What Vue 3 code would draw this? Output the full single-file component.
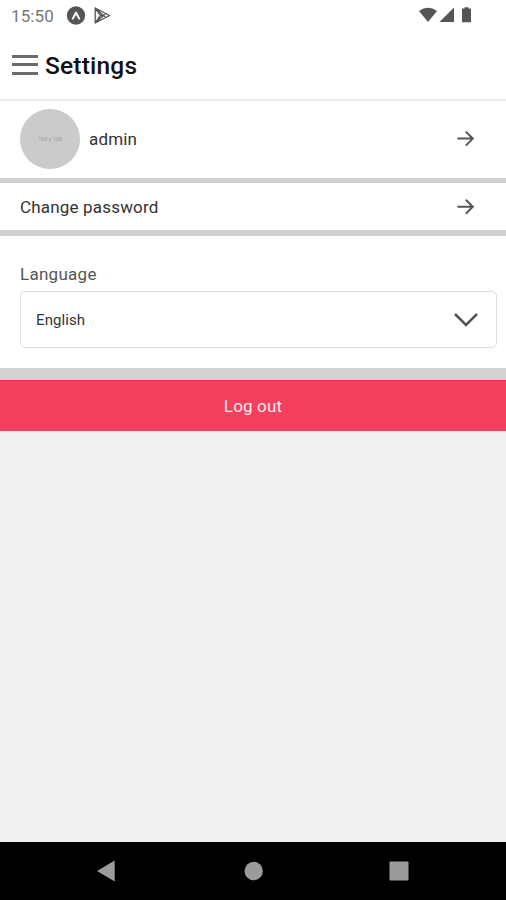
<script setup>
import { ref } from 'vue'

const language = ref('English')
</script>

<template>
  <div class="screen">
    <div class="status">
      <span class="time">15:50</span>
      <svg class="expo" width="20" height="20" viewBox="0 0 20 20">
        <circle cx="10" cy="9.5" r="9.2" fill="#555" />
        <path d="M5.6 12.8 9 6.2Q10 4.9 11 6.2L14.4 12.8Q13.2 14.5 12.2 12.7L10 9 7.8 12.7Q6.8 14.5 5.6 12.8Z" fill="#f4f4f4" />
      </svg>
      <svg class="play" width="18" height="18" viewBox="0 0 18 18" fill="none" stroke="#555" stroke-width="1.3" stroke-linejoin="round">
        <path d="M1.2 1V16L15.6 8.5ZM1.2 1 11.6 10.6M1.2 16 11.6 6.4M1.2 16 6.5 8.5 1.2 1M6.5 8.5H9" />
      </svg>
      <svg class="signals" width="54" height="18" viewBox="0 0 54 18" fill="#555">
        <path d="M0 4Q9-2.5 18 4L9 15Z" />
        <path d="M35 .5V15H20.5Z" />
        <path d="M45.5 .2H49.5V1.5H52V15.2H43V1.5H45.5Z" />
      </svg>
    </div>

    <header class="header">
      <div class="menu"><i></i><i></i><i></i></div>
      <h1>Settings</h1>
    </header>

    <main>
      <section class="row profile">
        <div class="avatar">100 x 100</div>
        <span class="name">admin</span>
        <svg class="arrow" width="18" height="18" viewBox="0 0 18 18"><path d="M.4 8.6H15.6M8.8 1.6 15.8 8.6 8.8 15.6" /></svg>
      </section>
      <section class="row password">
        <span class="pass-label">Change password</span>
        <svg class="arrow" width="18" height="18" viewBox="0 0 18 18"><path d="M.4 8.8H15.6M8.8 1.8 15.8 8.8 8.8 15.8" /></svg>
      </section>
      <section class="language">
        <div class="label">Language</div>
        <div class="select">
          <span>{{ language }}</span>
          <svg width="26" height="16" viewBox="0 0 26 16"><path d="M2 2 13 13 24 2" /></svg>
        </div>
      </section>
      <button class="logout">Log out</button>
    </main>

    <nav class="nav">
      <svg width="506" height="58" viewBox="0 0 506 58" fill="#9b9b9b">
        <path d="M97 29 114.7 18.5V39.5Z" />
        <circle cx="253.7" cy="29" r="9.2" />
        <rect x="389.5" y="19.5" width="19" height="19" rx="1" />
      </svg>
    </nav>
  </div>
</template>

<style>
body { margin: 0; }
</style>

<style scoped>
.screen {
  width: 506px;
  height: 900px;
  display: flex;
  flex-direction: column;
  overflow: hidden;
  background: #f1f1f1;
  font-family: Roboto, sans-serif;
  color: #333;
}
.status {
  height: 31px;
  display: flex;
  align-items: center;
  padding: 0 33px 0 11px;
  box-sizing: border-box;
  background: #fff;
}
.time {
  width: 55px;
  font-size: 17px;
  letter-spacing: 0.1px;
  color: #777;
}
.play { margin-left: 8px; }
.signals { margin-left: auto; }
.header {
  height: 70px;
  box-sizing: border-box;
  display: flex;
  align-items: center;
  padding: 0 12px;
  background: #fff;
  border-bottom: 2px solid #ebebeb;
}
.menu {
  width: 26px;
  height: 20px;
  display: flex;
  flex-direction: column;
  justify-content: space-between;
  margin: -1px 7px 0 0;
}
.menu i { height: 3px; background: #6b6b6b; }
h1 {
  margin: 1px 0 0;
  font-size: 24.5px;
  line-height: 30px;
  font-weight: 500;
  letter-spacing: 0.2px;
  color: #111;
}
main { display: flex; flex-direction: column; flex: 1; }
.row {
  box-sizing: border-box;
  display: flex;
  align-items: center;
  padding: 0 31px 0 20px;
  background: #fff;
  font-size: 17px;
  letter-spacing: 0.18px;
}
.profile { height: 82px; padding-bottom: 2px; border-bottom: 5px solid #d1d1d1; }
.password { height: 53px; border-bottom: 6px solid #d1d1d1; }
.avatar {
  width: 60px;
  height: 60px;
  border-radius: 50%;
  background: #cbcbcb;
  color: #9b9b9b;
  font-size: 5.5px;
  line-height: 60px;
  letter-spacing: 0;
  text-align: center;
  margin-right: 9px;
}
.arrow {
  margin-left: auto;
  fill: none;
  stroke: #555;
  stroke-width: 2;
}
.language {
  height: 144px;
  box-sizing: border-box;
  padding: 27px 9px 0 20px;
  background: #fff;
  border-bottom: 12px solid #d2d2d2;
}
.label { font-size: 17px; line-height: 22px; letter-spacing: 0.27px; color: #555; }
.select {
  height: 57px;
  box-sizing: border-box;
  margin-top: 6px;
  padding: 0 17px 0 15px;
  display: flex;
  align-items: center;
  justify-content: space-between;
  border: 1.5px solid #dedede;
  border-radius: 5px;
  font-size: 15px;
  letter-spacing: 0.1px;
}
.select span { padding-top: 1px; }
.select svg { fill: none; stroke: #555; stroke-width: 2.5; }
.logout {
  height: 51px;
  border: 0;
  border-top: 1px solid #db2c51;
  padding: 0;
  background: #f4405f;
  color: #ffe9ec;
  font: 17px Roboto, sans-serif;
  letter-spacing: 0.15px;
}
.nav { height: 58px; background: #000; }
.nav svg { display: block; }
</style>
